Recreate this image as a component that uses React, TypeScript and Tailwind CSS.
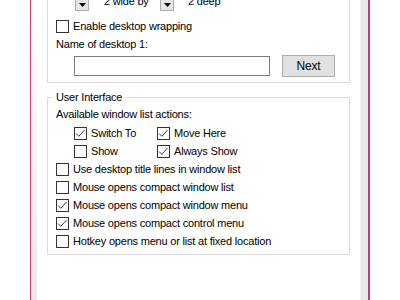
import React from "react";

function Box({ checked }: { checked?: boolean }) {
  return (
    <span className="flex h-[13px] w-[13px] shrink-0 items-center justify-center border border-[#333333] bg-white">
      {checked && (
        <svg width="11" height="11" viewBox="0 0 11 11" className="block">
          <path d="M1 5.5 L3.8 8.3 L9.5 2" fill="none" stroke="#3a3a3a" strokeWidth="1" />
        </svg>
      )}
    </span>
  );
}

function Option({ label, checked }: { label: string; checked?: boolean }) {
  return (
    <div className="flex h-[18px] items-center gap-[4px]">
      <Box checked={checked} />
      <span className="whitespace-nowrap">{label}</span>
    </div>
  );
}

function Spin() {
  return (
    <span className="flex h-[13px] w-[14px] shrink-0 items-center justify-center self-end border border-[#adadad] bg-[#e5e5e5]">
      <svg width="7" height="4" viewBox="0 0 7 4" className="block">
        <path d="M0 0 H7 L3.5 4 Z" fill="#000" />
      </svg>
    </span>
  );
}

export default function App() {
  return (
    <div className="flex h-[300px] w-[400px] overflow-hidden bg-white font-['Liberation_Sans',Arial,sans-serif] text-[11px] leading-[16px] tracking-[-0.2px] text-black">
      <div className="w-[30px] shrink-0" />
      <div className="w-px shrink-0 bg-[#cf3f86]" />
      <div className="w-[6px] shrink-0 bg-gradient-to-b from-white to-[#e9e9e9]" />

      <div className="flex w-[323px] shrink-0 flex-col px-[10px]">
        {/* desktop layout group (top cut off) */}
        <div className="-mt-[30px] border border-[#dcdcdc] pb-[5px] pl-[8px] pt-[22px]">
          <div className="flex h-[18px] items-start">
            <span className="ml-[19px]" />
            <Spin />
            <span className="ml-[15px] w-[56px] whitespace-nowrap">2 wide by</span>
            <Spin />
            <span className="ml-[14px] whitespace-nowrap">2 deep</span>
          </div>
          <div className="mt-[6px]">
            <Option label="Enable desktop wrapping" />
          </div>
          <div className="mt-[1px]">Name of desktop 1:</div>
          <div className="mt-[3px] flex h-[22px] items-center">
            <input
              className="ml-[18px] h-[20px] w-[196px] border border-[#7a7a7a] bg-white outline-none"
              defaultValue=""
            />
            <button className="ml-[12px] h-[22px] w-[53px] border border-[#adadad] bg-[#e1e1e1] text-[12px]">
              Next
            </button>
          </div>
        </div>

        {/* user interface group */}
        <fieldset className="mt-[6px] border border-[#dcdcdc] px-0 pb-[4px]">
          <legend className="ml-[4px] px-[4px] leading-[16px]">User Interface</legend>
          <div className="pl-[8px] pt-[1px]">
            <div>Available window list actions:</div>
            <div className="ml-[18px] mt-[2px] grid grid-cols-[83px_auto]">
              <Option label="Switch To" checked />
              <Option label="Move Here" checked />
              <Option label="Show" />
              <Option label="Always Show" checked />
            </div>
            <Option label="Use desktop title lines in window list" />
            <Option label="Mouse opens compact window list" />
            <Option label="Mouse opens compact window menu" checked />
            <Option label="Mouse opens compact control menu" checked />
            <Option label="Hotkey opens menu or list at fixed location" />
          </div>
        </fieldset>
      </div>

      <div className="w-[8px] shrink-0 border-l border-[#f0f0f0] bg-[#e8e8e8]" />
      <div className="w-[2px] shrink-0 bg-[#c23a82]" />
    </div>
  );
}
